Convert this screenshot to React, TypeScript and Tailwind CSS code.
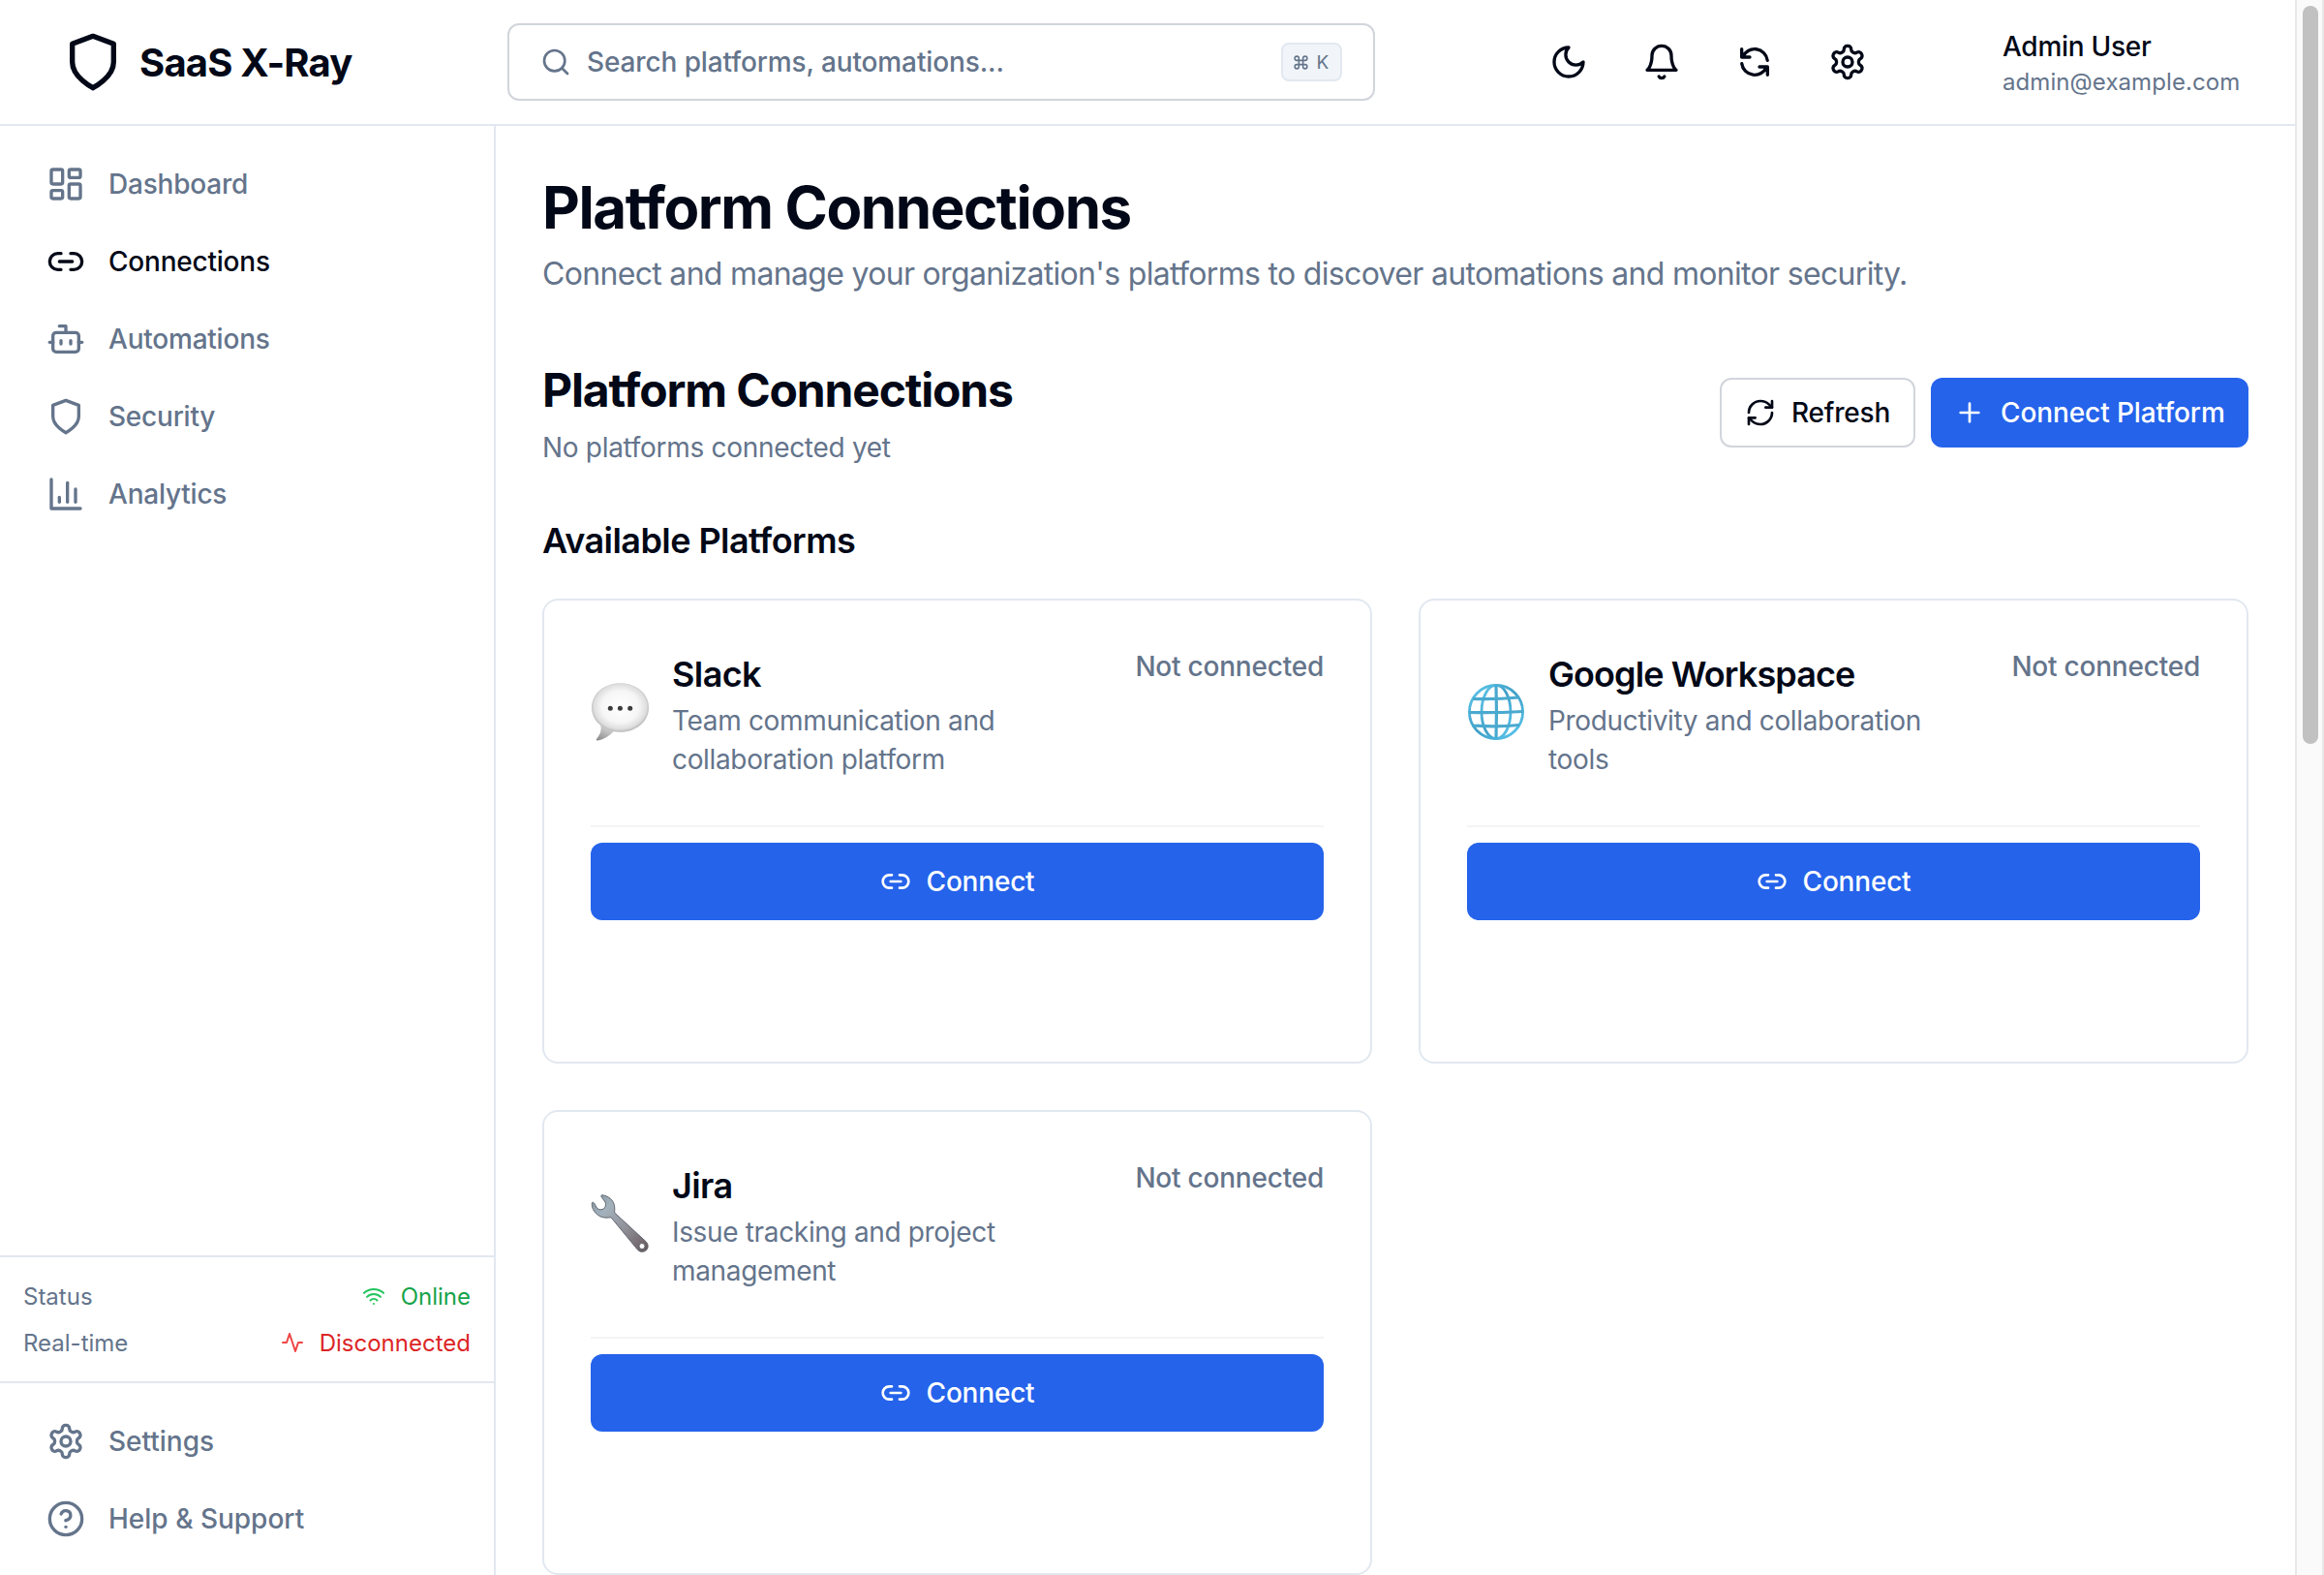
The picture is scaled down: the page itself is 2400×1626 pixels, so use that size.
import React from "react";
import type { ReactNode } from "react";

type IconProps = { className?: string };

function Stroke({ className, children }: { className?: string; children: ReactNode }) {
  return (
    <svg
      viewBox="0 0 24 24"
      fill="none"
      stroke="currentColor"
      strokeWidth={2}
      strokeLinecap="round"
      strokeLinejoin="round"
      className={`shrink-0 ${className ?? ""}`}
    >
      {children}
    </svg>
  );
}

const Shield = ({ className }: IconProps) => (
  <Stroke className={className}>
    <path d="M12 22s8-4 8-10V5l-8-3-8 3v7c0 6 8 10 8 10" />
  </Stroke>
);

const Search = ({ className }: IconProps) => (
  <Stroke className={className}>
    <circle cx="11" cy="11" r="8" />
    <path d="m21 21-4.3-4.3" />
  </Stroke>
);

const Moon = ({ className }: IconProps) => (
  <Stroke className={className}>
    <path d="M12 3a6 6 0 0 0 9 9 9 9 0 1 1-9-9Z" />
  </Stroke>
);

const Bell = ({ className }: IconProps) => (
  <Stroke className={className}>
    <path d="M6 8a6 6 0 0 1 12 0c0 7 3 9 3 9H3s3-2 3-9" />
    <path d="M10.3 21a1.94 1.94 0 0 0 3.4 0" />
  </Stroke>
);

const Sync = ({ className }: IconProps) => (
  <Stroke className={className}>
    <path d="M4 4v5h.582m15.356 2A8.001 8.001 0 004.582 9m0 0H9m11 11v-5h-.581m0 0a8.003 8.003 0 01-15.357-2m15.357 2H15" />
  </Stroke>
);

const Gear = ({ className }: IconProps) => (
  <Stroke className={className}>
    <path d="M12.22 2h-.44a2 2 0 0 0-2 2v.18a2 2 0 0 1-1 1.73l-.43.25a2 2 0 0 1-2 0l-.15-.08a2 2 0 0 0-2.73.73l-.22.38a2 2 0 0 0 .73 2.73l.15.1a2 2 0 0 1 1 1.72v.51a2 2 0 0 1-1 1.74l-.15.09a2 2 0 0 0-.73 2.73l.22.38a2 2 0 0 0 2.73.73l.15-.08a2 2 0 0 1 2 0l.43.25a2 2 0 0 1 1 1.73V20a2 2 0 0 0 2 2h.44a2 2 0 0 0 2-2v-.18a2 2 0 0 1 1-1.73l.43-.25a2 2 0 0 1 2 0l.15.08a2 2 0 0 0 2.73-.73l.22-.39a2 2 0 0 0-.73-2.73l-.15-.08a2 2 0 0 1-1-1.74v-.5a2 2 0 0 1 1-1.74l.15-.09a2 2 0 0 0 .73-2.73l-.22-.38a2 2 0 0 0-2.73-.73l-.15.08a2 2 0 0 1-2 0l-.43-.25a2 2 0 0 1-1-1.73V4a2 2 0 0 0-2-2z" />
    <circle cx="12" cy="12" r="3" />
  </Stroke>
);

const Dashboard = ({ className }: IconProps) => (
  <Stroke className={className}>
    <rect width="7" height="9" x="3" y="3" rx="1" />
    <rect width="7" height="5" x="14" y="3" rx="1" />
    <rect width="7" height="9" x="14" y="12" rx="1" />
    <rect width="7" height="5" x="3" y="16" rx="1" />
  </Stroke>
);

const Link = ({ className }: IconProps) => (
  <Stroke className={className}>
    <path d="M9 17H7A5 5 0 0 1 7 7h2" />
    <path d="M15 7h2a5 5 0 1 1 0 10h-2" />
    <path d="M8 12h8" />
  </Stroke>
);

const Bot = ({ className }: IconProps) => (
  <Stroke className={className}>
    <path d="M12 8V4H8" />
    <rect width="16" height="12" x="4" y="8" rx="2" />
    <path d="M2 14h2" />
    <path d="M20 14h2" />
    <path d="M15 13v2" />
    <path d="M9 13v2" />
  </Stroke>
);

const Chart = ({ className }: IconProps) => (
  <Stroke className={className}>
    <path d="M3 3v18h18" />
    <path d="M18 17V9" />
    <path d="M13 17V5" />
    <path d="M8 17v-3" />
  </Stroke>
);

const Help = ({ className }: IconProps) => (
  <Stroke className={className}>
    <circle cx="12" cy="12" r="10" />
    <path d="M9.09 9a3 3 0 0 1 5.83 1c0 2-3 3-3 3" />
    <path d="M12 17h.01" />
  </Stroke>
);

const Wifi = ({ className }: IconProps) => (
  <Stroke className={className}>
    <path d="M12 20h.01" />
    <path d="M2 8.82a15 15 0 0 1 20 0" />
    <path d="M5 12.859a10 10 0 0 1 14 0" />
    <path d="M8.5 16.429a5 5 0 0 1 7 0" />
  </Stroke>
);

const Activity = ({ className }: IconProps) => (
  <Stroke className={className}>
    <path d="M22 12h-4l-3 9L9 3l-3 9H2" />
  </Stroke>
);

const Refresh = ({ className }: IconProps) => (
  <Stroke className={className}>
    <path d="M3 12a9 9 0 0 1 9-9 9.75 9.75 0 0 1 6.74 2.74L21 8" />
    <path d="M21 3v5h-5" />
    <path d="M21 12a9 9 0 0 1-9 9 9.75 9.75 0 0 1-6.74-2.74L3 16" />
    <path d="M8 16H3v5" />
  </Stroke>
);

const Plus = ({ className }: IconProps) => (
  <Stroke className={className}>
    <path d="M5 12h14" />
    <path d="M12 5v14" />
  </Stroke>
);

function SpeechBubble() {
  return (
    <svg viewBox="0 0 60 60" className="mb-0.5 size-[60px] shrink-0">
      <defs>
        <radialGradient id="bubble" cx="0.5" cy="0.48" r="0.54">
          <stop offset="0" stopColor="#ffffff" />
          <stop offset="0.6" stopColor="#f6f6f6" />
          <stop offset="0.85" stopColor="#dedede" />
          <stop offset="1" stopColor="#ababab" />
        </radialGradient>
        <linearGradient id="tail" x1="0.8" y1="0" x2="0.2" y2="1">
          <stop offset="0" stopColor="#e4e4e4" />
          <stop offset="1" stopColor="#8f8f8f" />
        </linearGradient>
      </defs>
      <path d="M10 43c2 7-1 11-4 15-.6 1.2.3 1.7 1.5 1.5C15 58 20 54 25 49z" fill="url(#tail)" />
      <path
        d="M30.5 0.3C47 0.3 60 11 60 25.5S47 50.8 30.5 50.8c-3 0-5-.3-8-1C10 46 1 38 1 25.5 1 11 14 0.3 30.5 0.3z"
        fill="url(#bubble)"
      />
      <circle cx="20.3" cy="26.3" r="2.5" fill="#3c3c3c" />
      <circle cx="30.4" cy="26.3" r="2.5" fill="#3c3c3c" />
      <circle cx="40.7" cy="26.3" r="2.5" fill="#3c3c3c" />
    </svg>
  );
}

function Globe() {
  return (
    <svg viewBox="0 0 60 60" fill="none" className="mb-0.5 size-[60px] shrink-0">
      <defs>
        <linearGradient id="globe" x1="0" y1="0" x2="1" y2="1">
          <stop offset="0" stopColor="#5fc8ec" />
          <stop offset="0.5" stopColor="#3f9fc6" />
          <stop offset="1" stopColor="#5cc8f0" />
        </linearGradient>
      </defs>
      <g stroke="url(#globe)" strokeWidth="2.8">
        <circle cx="30" cy="30" r="27.6" />
        <ellipse cx="30" cy="30" rx="15" ry="27.6" />
      </g>
      <g stroke="#4aa9cf" strokeWidth="3.2">
        <path d="M30 2.5c.6 18 .6 37 0 55" />
        <path d="M6 16.5c15 .5 32 0 48-1.5" />
        <path d="M2.2 30.5c18 .5 38 0 55.6-1" />
        <path d="M6 44c15 1.2 32 1.2 48-.5" />
      </g>
    </svg>
  );
}

function Wrench() {
  return (
    <svg viewBox="0 0 60 60" className="mb-0.5 size-[60px] shrink-0">
      <defs>
        <linearGradient id="wrench" x1="0" y1="0" x2="1" y2="1">
          <stop offset="0" stopColor="#8396a2" />
          <stop offset="0.25" stopColor="#a3b1bc" />
          <stop offset="0.6" stopColor="#8f8f96" />
          <stop offset="1" stopColor="#66565a" />
        </linearGradient>
      </defs>
      <path
        fillRule="evenodd"
        fill="url(#wrench)"
        stroke="#565c65"
        strokeWidth="0.9"
        d="M12 0.8c6 .6 11.500 5 12.500 11 .5 3 .2 5 .2 7.200L57 48.700c3 3.300 2.800 7-.1 9.300-3 2.300-6.500 1.500-8.800-1.200L21 23.800c-3 .4-6.500.7-10-.5C4.500 20.500.8 15 1.300 9c.3-1 1.500-1 2.200 0l3.200 5.500c2.500 1.800 5 1.500 6.800.3 2-1.600 2.500-4.500 1.500-6.800L11 2.500c-.5-1 0-1.800 1-1.700zM53 50.500a3 3 0 1 0 .01 6 3 3 0 0 0-.01-6z"
      />
    </svg>
  );
}

type NavItemProps = { icon: ReactNode; label: string; active?: boolean };

function NavItem({ icon, label, active }: NavItemProps) {
  return (
    <a
      className={`flex h-[72px] items-center gap-6 px-6 text-[28px] font-medium ${
        active ? "text-[#020817]" : "text-[#64748b]"
      }`}
    >
      {icon}
      <span>{label}</span>
    </a>
  );
}

type PlatformCardProps = { art: ReactNode; name: ReactNode; description: string };

function PlatformCard({ art, name, description }: PlatformCardProps) {
  return (
    <div className="h-[480px] rounded-2xl border-2 border-[#e2e8f0] p-12">
      <div className="flex items-start justify-between">
        <div className="flex items-center gap-6">
          {art}
          <div className="w-[430px]">
            <h4 className="text-[36px] leading-[56px] font-semibold tracking-[-0.6px]">{name}</h4>
            <p className="text-[28px] leading-10 tracking-[-0.34px] text-[#64748b]">{description}</p>
          </div>
        </div>
        <span className="text-[28px] leading-10 font-medium tracking-[-0.22px] whitespace-nowrap text-[#64748b]">
          Not connected
        </span>
      </div>
      <div className="mt-12 border-t-2 border-[#f3f4f6] pt-4">
        <button className="flex h-20 w-full items-center justify-center gap-4 rounded-xl bg-[#2563eb] text-[28px] font-medium tracking-[-0.2px] text-white">
          <Link className="size-8" />
          Connect
        </button>
      </div>
    </div>
  );
}

export default function App() {
  return (
    <div className="flex h-[1626px] w-[2400px] overflow-hidden bg-white font-[Inter,sans-serif] text-[#020817]">
      <div className="flex w-[2370px] flex-col">
        <header className="flex h-[130px] shrink-0 items-center border-b-2 border-[#e2e8f0] pl-16">
          <div className="flex w-[460px] items-center gap-4">
            <Shield className="size-16" />
            <span className="pt-0.5 text-[40px] leading-none font-bold tracking-[-0.8px]">SaaS X-Ray</span>
          </div>
          <div className="flex h-20 w-[896px] items-center rounded-xl border-2 border-[#d1d5db] pr-8 pl-8">
            <Search className="size-8 text-[#64748b]" />
            <span className="ml-4 flex-1 text-[28px] font-medium tracking-[-0.12px] text-[#64748b]">
              Search platforms, automations...
            </span>
            <kbd className="flex h-10 w-[63px] items-center justify-center gap-2 rounded-lg border-2 border-[#e2e8f0] bg-[#f1f5f9] font-[Inter,sans-serif] text-[19px] leading-none text-[#64748b]">
              <svg
                viewBox="0 0 24 24"
                fill="none"
                stroke="currentColor"
                strokeWidth={2.2}
                className="-ml-0.5 size-[17px]"
              >
                <path d="M15 6v12a3 3 0 1 0 3-3H6a3 3 0 1 0 3 3V6a3 3 0 1 0-3 3h12a3 3 0 1 0-3-3" />
              </svg>
              <span>K</span>
            </kbd>
          </div>
          <div className="ml-[160px] flex gap-4">
            <button className="flex size-20 items-center justify-center">
              <Moon className="size-10" />
            </button>
            <button className="flex size-20 items-center justify-center">
              <Bell className="size-10" />
            </button>
            <button className="flex size-20 items-center justify-center">
              <Sync className="size-10" />
            </button>
            <button className="flex size-20 items-center justify-center">
              <Gear className="size-10" />
            </button>
          </div>
          <div className="ml-[120px]">
            <div className="text-[28px] leading-10 font-medium tracking-[-0.28px]">Admin User</div>
            <div className="pt-px text-2xl leading-[31px] tracking-[0.08px] text-[#64748b]">admin@example.com</div>
          </div>
        </header>

        <div className="flex h-[1496px]">
          <aside className="flex w-[512px] shrink-0 flex-col border-r-2 border-[#e2e8f0]">
            <nav className="flex h-[1166px] flex-col gap-2 px-6 pt-6 tracking-[-0.22px]">
              <NavItem icon={<Dashboard className="size-10" />} label="Dashboard" />
              <NavItem icon={<Link className="size-10" />} label="Connections" active />
              <NavItem icon={<Bot className="size-10" />} label="Automations" />
              <NavItem icon={<Shield className="size-10" />} label="Security" />
              <NavItem icon={<Chart className="size-10" />} label="Analytics" />
            </nav>
            <div className="flex h-[130px] flex-col gap-4 border-t-2 border-[#e2e8f0] p-6 text-2xl leading-8 text-[#64748b]">
              <div className="flex items-center justify-between">
                <span className="pt-px leading-[31px]">Status</span>
                <span className="flex items-center gap-4 text-[#16a34a]">
                  <Wifi className="size-6 text-[#22c55e]" />
                  <span className="pt-px leading-[31px]">Online</span>
                </span>
              </div>
              <div className="flex items-center justify-between">
                <span className="pt-px leading-[31px]">Real-time</span>
                <span className="flex items-center gap-4 text-[#dc2626]">
                  <Activity className="size-6 text-[#ef4444]" />
                  <span className="pt-px leading-[31px]">Disconnected</span>
                </span>
              </div>
            </div>
            <div className="flex h-[200px] flex-col gap-2 border-t-2 border-[#e2e8f0] px-6 pt-6">
              <NavItem icon={<Gear className="size-10" />} label="Settings" />
              <NavItem icon={<Help className="size-10" />} label="Help & Support" />
            </div>
          </aside>

          <main className="flex-1 overflow-hidden px-12 pt-12">
            <h1 className="pt-px text-[60px] leading-[71px] font-bold tracking-[-1.42px]">Platform Connections</h1>
            <p className="mt-[9px] text-[32px] leading-[48px] tracking-[-0.68px] whitespace-nowrap text-[#64748b]">
              Connect and manage your organization's platforms to discover automations and monitor security.
            </p>

            <div className="mt-[63px] flex h-[112px] items-center justify-between">
              <div>
                <h2 className="pt-0.5 text-[48px] leading-[62px] font-bold tracking-[-1.16px]">Platform Connections</h2>
                <p className="mt-2 text-[28px] leading-10 tracking-[-0.3px] text-[#64748b]">
                  No platforms connected yet
                </p>
              </div>
              <div className="flex gap-4 text-[28px] font-medium">
                <button className="flex h-[72px] w-[202px] items-center gap-4 rounded-xl border-2 border-[#d1d5db] px-6 tracking-[-0.2px]">
                  <Refresh className="size-8" />
                  Refresh
                </button>
                <button className="flex h-[72px] w-[328px] items-center gap-4 rounded-xl bg-[#2563eb] px-6 tracking-[-0.1px] whitespace-nowrap text-white">
                  <Plus className="size-8" />
                  Connect Platform
                </button>
              </div>
            </div>

            <h3 className="mt-12 text-[36px] leading-[56px] font-semibold tracking-[-0.56px]">Available Platforms</h3>
            <div className="mt-8 grid grid-cols-2 gap-12">
              <PlatformCard
                art={<SpeechBubble />}
                name="Slack"
                description="Team communication and collaboration platform"
              />
              <PlatformCard
                art={<Globe />}
                name={<span className="tracking-tight">Google Workspace</span>}
                description="Productivity and collaboration tools"
              />
              <PlatformCard
                art={<Wrench />}
                name="Jira"
                description="Issue tracking and project management"
              />
            </div>
          </main>
        </div>
      </div>

      <div className="w-[30px] border-x-2 border-[#e8e8e8] bg-[#fafafa] pt-1.5 pl-1.5">
        <div className="h-[762px] w-4 rounded-full bg-[#c1c1c1]" />
      </div>
    </div>
  );
}
